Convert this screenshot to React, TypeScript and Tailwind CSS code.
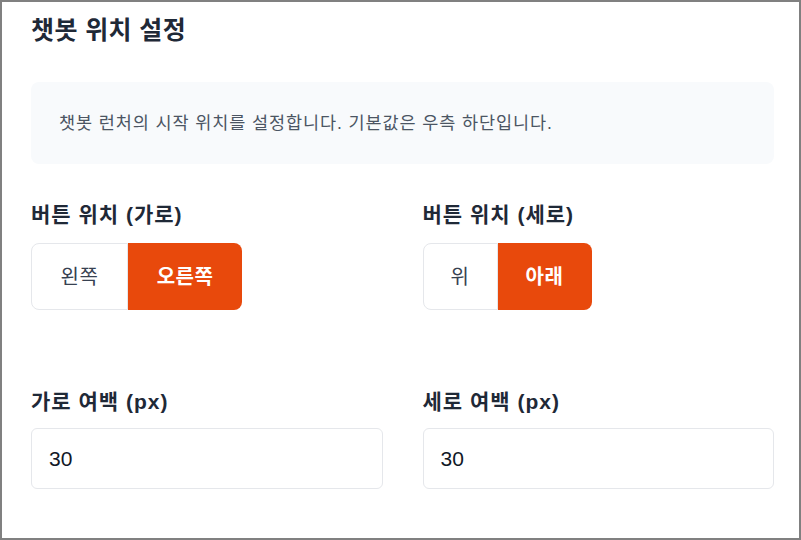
import { useState } from 'react';

const FONT = { fontFamily: '"Liberation Sans", "Noto Sans CJK KR", sans-serif' };

function Toggle({
  options,
  value,
  onChange,
}: {
  options: { key: string; label: string; w: string }[];
  value: string;
  onChange: (v: string) => void;
}) {
  return (
    <div className="flex">
      {options.map((o, i) => {
        const active = o.key === value;
        const first = i === 0;
        const last = i === options.length - 1;
        return (
          <button
            key={o.key}
            onClick={() => onChange(o.key)}
            className={[
              o.w,
              'h-[67px] text-[20px] tracking-[0.5px] flex items-center justify-center',
              first ? 'rounded-l-lg' : '',
              last ? 'rounded-r-lg' : '',
              active
                ? 'bg-[#e8490c] text-white font-bold'
                : 'bg-white text-[#374151] border border-[#e5e7eb]',
            ].join(' ')}
          >
            {o.label}
          </button>
        );
      })}
    </div>
  );
}

export default function App() {
  const [horizontal, setHorizontal] = useState('right');
  const [vertical, setVertical] = useState('bottom');
  const [marginX, setMarginX] = useState('30');
  const [marginY, setMarginY] = useState('30');

  return (
    <div
      style={FONT}
      className="w-[801px] h-[540px] bg-white border-2 border-[#808080] pl-[29px] pr-[25px] overflow-hidden"
    >
      <h2 className="text-[25px] tracking-[0.4px] font-bold text-[#1f2937] mt-[12px] leading-[32px]">
        챗봇 위치 설정
      </h2>

      {/* info box */}
      <div className="mt-[36px] h-[82px] bg-[#f8fafc] rounded-lg flex items-center pl-[28px]">
        <p className="text-[17.5px] tracking-[0.9px] text-[#4b5563]">
          챗봇 런처의 시작 위치를 설정합니다. 기본값은 우측 하단입니다.
        </p>
      </div>

      <div className="grid grid-cols-2 gap-x-[40px] mt-[37px]">
        <div>
          <label className="block text-[21px] tracking-[1px] font-semibold text-[#1f2937] leading-[28px]">
            버튼 위치 (가로)
          </label>
          <div className="mt-[14px]">
            <Toggle
              value={horizontal}
              onChange={setHorizontal}
              options={[
                { key: 'left', label: '왼쪽', w: 'w-[97px]' },
                { key: 'right', label: '오른쪽', w: 'w-[114px]' },
              ]}
            />
          </div>
        </div>
        <div>
          <label className="block text-[21px] tracking-[1px] font-semibold text-[#1f2937] leading-[28px]">
            버튼 위치 (세로)
          </label>
          <div className="mt-[14px]">
            <Toggle
              value={vertical}
              onChange={setVertical}
              options={[
                { key: 'top', label: '위', w: 'w-[75px]' },
                { key: 'bottom', label: '아래', w: 'w-[94px]' },
              ]}
            />
          </div>
        </div>

        <div className="mt-[78px]">
          <label className="block text-[21px] tracking-[1px] font-semibold text-[#1f2937] leading-[28px]">
            가로 여백 (px)
          </label>
          <input
            value={marginX}
            onChange={(e) => setMarginX(e.target.value)}
            className="mt-[12px] w-full h-[61px] rounded-md border border-[#e5e7eb] px-[17px] text-[21px] text-[#111827] outline-none"
          />
        </div>
        <div className="mt-[78px]">
          <label className="block text-[21px] tracking-[1px] font-semibold text-[#1f2937] leading-[28px]">
            세로 여백 (px)
          </label>
          <input
            value={marginY}
            onChange={(e) => setMarginY(e.target.value)}
            className="mt-[12px] w-full h-[61px] rounded-md border border-[#e5e7eb] px-[17px] text-[21px] text-[#111827] outline-none"
          />
        </div>
      </div>
    </div>
  );
}
